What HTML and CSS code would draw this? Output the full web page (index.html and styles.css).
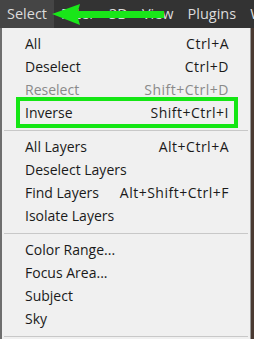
FILE: index.html
```html
<!DOCTYPE html>
<html lang="en">
<head>
    <meta charset="UTF-8">
    <title>Select menu</title>
    <link rel="stylesheet" href="styles.css">
</head>
<body>

<div class="menubar">
    <span class="top active">Select</span>
    <span class="top">Filter</span>
    <span class="top">3D</span>
    <span class="top">View</span>
    <span class="top">Plugins</span>
    <span class="top">Window</span>
    <!-- flecha que apunta a Select -->
    <svg class="arrow" width="120" height="24" viewBox="0 0 120 24">
        <polygon points="0,10 28,0 26,7 112,7 112,14 26,14 28,21" fill="#19e619"/>
    </svg>
</div>

<div class="menu">
    <div class="item"><span>All</span><span class="key">Ctrl+A</span></div>
    <div class="item"><span>Deselect</span><span class="key">Ctrl+D</span></div>
    <div class="item disabled"><span>Reselect</span><span class="key">Shift+Ctrl+D</span></div>
    <div class="item marked"><span>Inverse</span><span class="key">Shift+Ctrl+I</span></div>
    <div class="sep"></div>
    <div class="item"><span>All Layers</span><span class="key">Alt+Ctrl+A</span></div>
    <div class="item"><span>Deselect Layers</span></div>
    <div class="item"><span>Find Layers</span><span class="key">Alt+Shift+Ctrl+F</span></div>
    <div class="item"><span>Isolate Layers</span></div>
    <div class="sep"></div>
    <div class="item"><span>Color Range...</span></div>
    <div class="item"><span>Focus Area...</span></div>
    <div class="item"><span>Subject</span></div>
    <div class="item"><span>Sky</span></div>
    <div class="sep"></div>
</div>

</body>
</html>
```

FILE: styles.css
```css
body {
    margin: 0;
    background-color: #4a3a32;
    font-family: "Open Sans", "Noto Sans", sans-serif;
    overflow: hidden;
}
.menubar {
    position: relative;
    display: flex;
    height: 28px;
    background-color: #333333;
    white-space: nowrap;
    overflow: hidden;
}
.top {
    padding: 0 7px;
    line-height: 28px;
    font-size: 14.5px;
    color: #dcdcdc;
}
.top.active {
    background-color: #454545;
}
.arrow {
    position: absolute;
    left: 52px;
    top: 4px;
}
.menu {
    margin: 0 3px 0 0;
    background-color: #f0f0f0;
    border-left: 2px solid #6e6e6e;
    border-right: 1px solid #9a9a9a;
    padding: 4px 0 0 0;
    height: calc(100vh - 28px);
    box-sizing: border-box;
    overflow: hidden;
}
.item {
    display: flex;
    justify-content: space-between;
    height: 23px;
    line-height: 23px;
    padding: 0 21px 0 23px;
    font-size: 14px;
    color: #1a1a1a;
    white-space: nowrap;
}
.key {
    letter-spacing: 0.5px;
}
.item.disabled {
    color: #8a8a8a;
}
.item.marked {
    margin: 0 16px 0 18px;
    padding: 0 5px;
    outline: 4px solid #14e614;
}
.sep {
    height: 1px;
    margin: 6px 2px 4px 2px;
    background-color: #c8c8c8;
}
```
